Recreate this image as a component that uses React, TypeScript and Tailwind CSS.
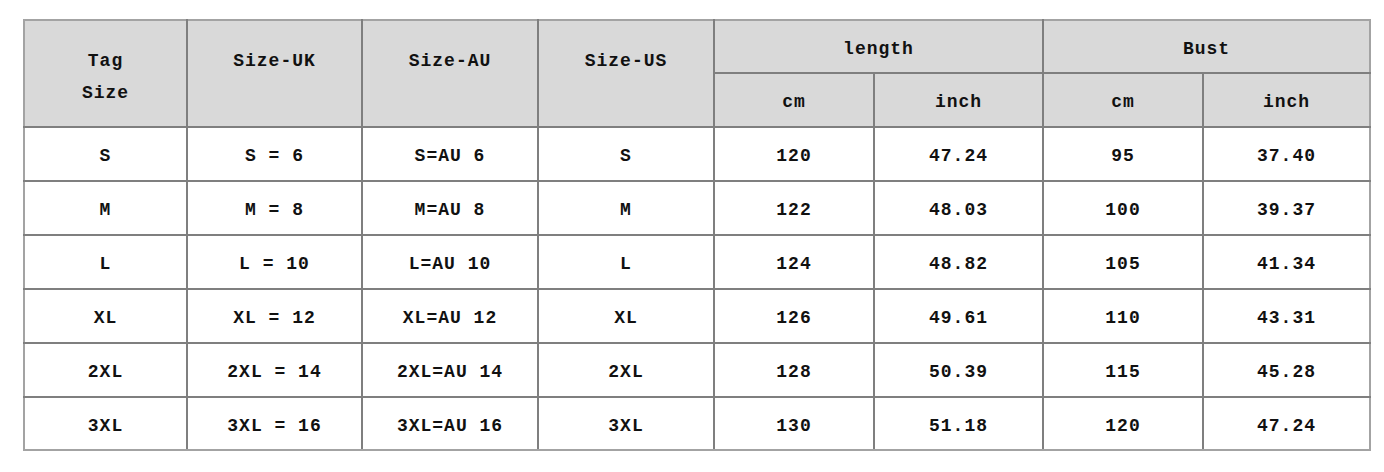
import React from 'react';

const rows = [
  ['S', 'S = 6', 'S=AU 6', 'S', '120', '47.24', '95', '37.40'],
  ['M', 'M = 8', 'M=AU 8', 'M', '122', '48.03', '100', '39.37'],
  ['L', 'L = 10', 'L=AU 10', 'L', '124', '48.82', '105', '41.34'],
  ['XL', 'XL = 12', 'XL=AU 12', 'XL', '126', '49.61', '110', '43.31'],
  ['2XL', '2XL = 14', '2XL=AU 14', '2XL', '128', '50.39', '115', '45.28'],
  ['3XL', '3XL = 16', '3XL=AU 16', '3XL', '130', '51.18', '120', '47.24'],
];

const widths = [163, 175, 176, 176, 160, 169, 160, 167];

// inner lines are darker, the outer frame a lighter grey
const cell = 'border-2 border-[#7f7f7f]';

export default function App() {
  return (
    <div className="w-[1384px] h-[472px] bg-white pt-[19px] pl-[23px]">
      <table
        className="table-fixed border-collapse w-[1347px] text-[18px] font-bold tracking-[1px] text-[#111] whitespace-pre"
        style={{ fontFamily: '"Liberation Mono", "DejaVu Sans Mono", monospace' }}
      >
        <colgroup>
          {widths.map((w, i) => (
            <col key={i} style={{ width: w }} />
          ))}
        </colgroup>
        <thead className="bg-[#d9d9d9]">
          <tr className="h-[53px]">
            <th rowSpan={2} className={`${cell} border-t-[#a3a3a3] border-l-[#a3a3a3] align-top pt-[24px] leading-[32px] font-bold`}>
              Tag<br />Size
            </th>
            <th rowSpan={2} className={`${cell} border-t-[#a3a3a3] align-top pt-[24px] leading-[32px] font-bold`}>Size-UK</th>
            <th rowSpan={2} className={`${cell} border-t-[#a3a3a3] align-top pt-[24px] leading-[32px] font-bold`}>Size-AU</th>
            <th rowSpan={2} className={`${cell} border-t-[#a3a3a3] align-top pt-[24px] leading-[32px] font-bold`}>Size-US</th>
            <th colSpan={2} className={`${cell} border-t-[#a3a3a3] pt-[5px] font-bold`}>length</th>
            <th colSpan={2} className={`${cell} border-t-[#a3a3a3] border-r-[#a3a3a3] pt-[5px] font-bold`}>Bust</th>
          </tr>
          <tr className="h-[54px]">
            <th className={`${cell} pt-[5px] font-bold`}>cm</th>
            <th className={`${cell} pt-[5px] font-bold`}>inch</th>
            <th className={`${cell} pt-[5px] font-bold`}>cm</th>
            <th className={`${cell} border-r-[#a3a3a3] pt-[5px] font-bold`}>inch</th>
          </tr>
        </thead>
        <tbody>
          {rows.map((r, ri) => (
            <tr key={r[0]} className={ri === rows.length - 1 ? 'h-[53px]' : 'h-[54px]'}>
              {r.map((c, i) => (
                <td
                  key={i}
                  className={`${cell} ${i === 0 ? 'border-l-[#a3a3a3]' : ''} ${i === 7 ? 'border-r-[#a3a3a3]' : ''} ${
                    ri === rows.length - 1 ? 'border-b-[#a3a3a3]' : ''
                  } text-center align-middle pt-[5px]`}
                >
                  {c}
                </td>
              ))}
            </tr>
          ))}
        </tbody>
      </table>
    </div>
  );
}
